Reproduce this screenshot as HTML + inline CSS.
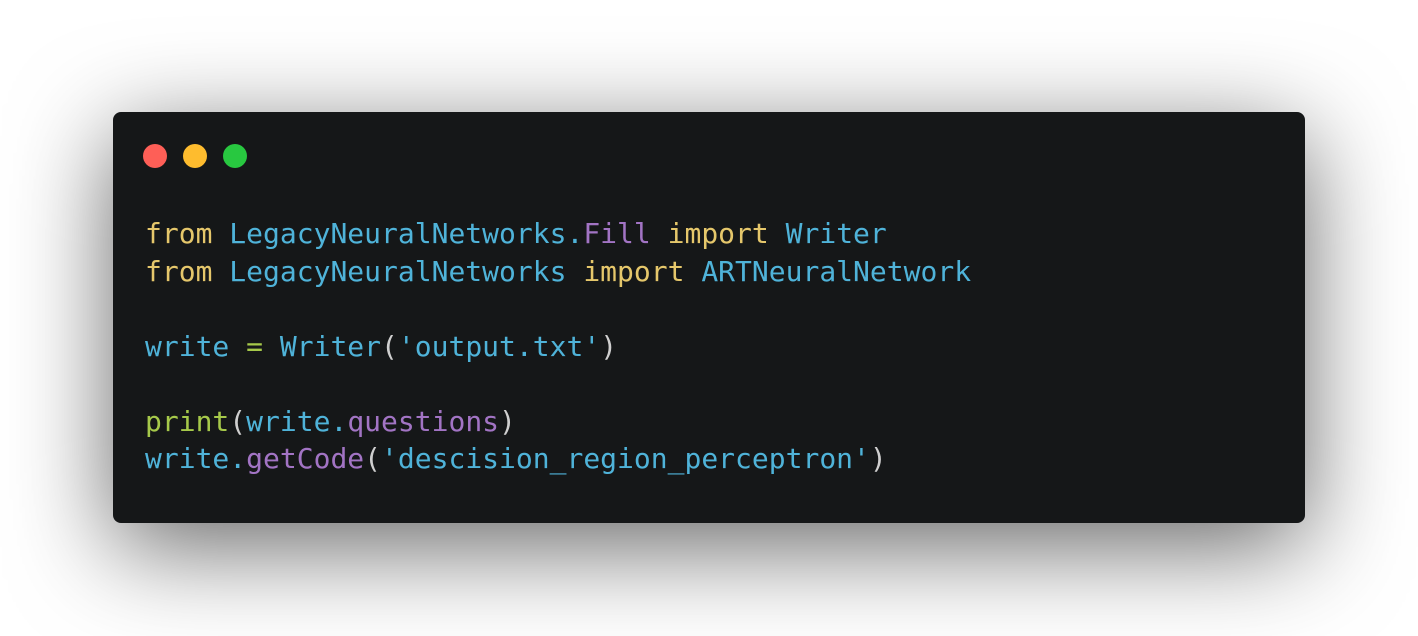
<!DOCTYPE html>
<html><head><style>
html,body{margin:0;padding:0;background:#fff;width:1418px;height:636px;overflow:hidden}
.win{position:absolute;left:113px;top:112px;width:1192px;height:411px;background:#151718;border-radius:8px;box-shadow:0 24px 100px rgba(0,0,0,0.6)}
.dot{position:absolute;top:32px;width:24px;height:24px;border-radius:50%}
pre{position:absolute;left:32px;top:103px;margin:0;font-family:"DejaVu Sans Mono","Liberation Mono",monospace;font-size:28px;line-height:37.5px;color:#4fb3d9}
.k{color:#e5c76b}.p{color:#a274c4}.g{color:#a6c94a}.w{color:#cfcfcf}
</style></head><body>
<div class="win">
<div class="dot" style="left:30px;background:#fe5f57"></div>
<div class="dot" style="left:70px;background:#febc2e"></div>
<div class="dot" style="left:110px;background:#28c840"></div>
<pre><span class="k">from</span> LegacyNeuralNetworks.<span class="p">Fill</span> <span class="k">import</span> Writer
<span class="k">from</span> LegacyNeuralNetworks <span class="k">import</span> ARTNeuralNetwork

write <span class="g">=</span> Writer<span class="w">(</span>'output.txt'<span class="w">)</span>

<span class="g">print</span><span class="w">(</span>write.<span class="p">questions</span><span class="w">)</span>
write.<span class="p">getCode</span><span class="w">(</span>'descision_region_perceptron'<span class="w">)</span></pre>
</div>
</body></html>
